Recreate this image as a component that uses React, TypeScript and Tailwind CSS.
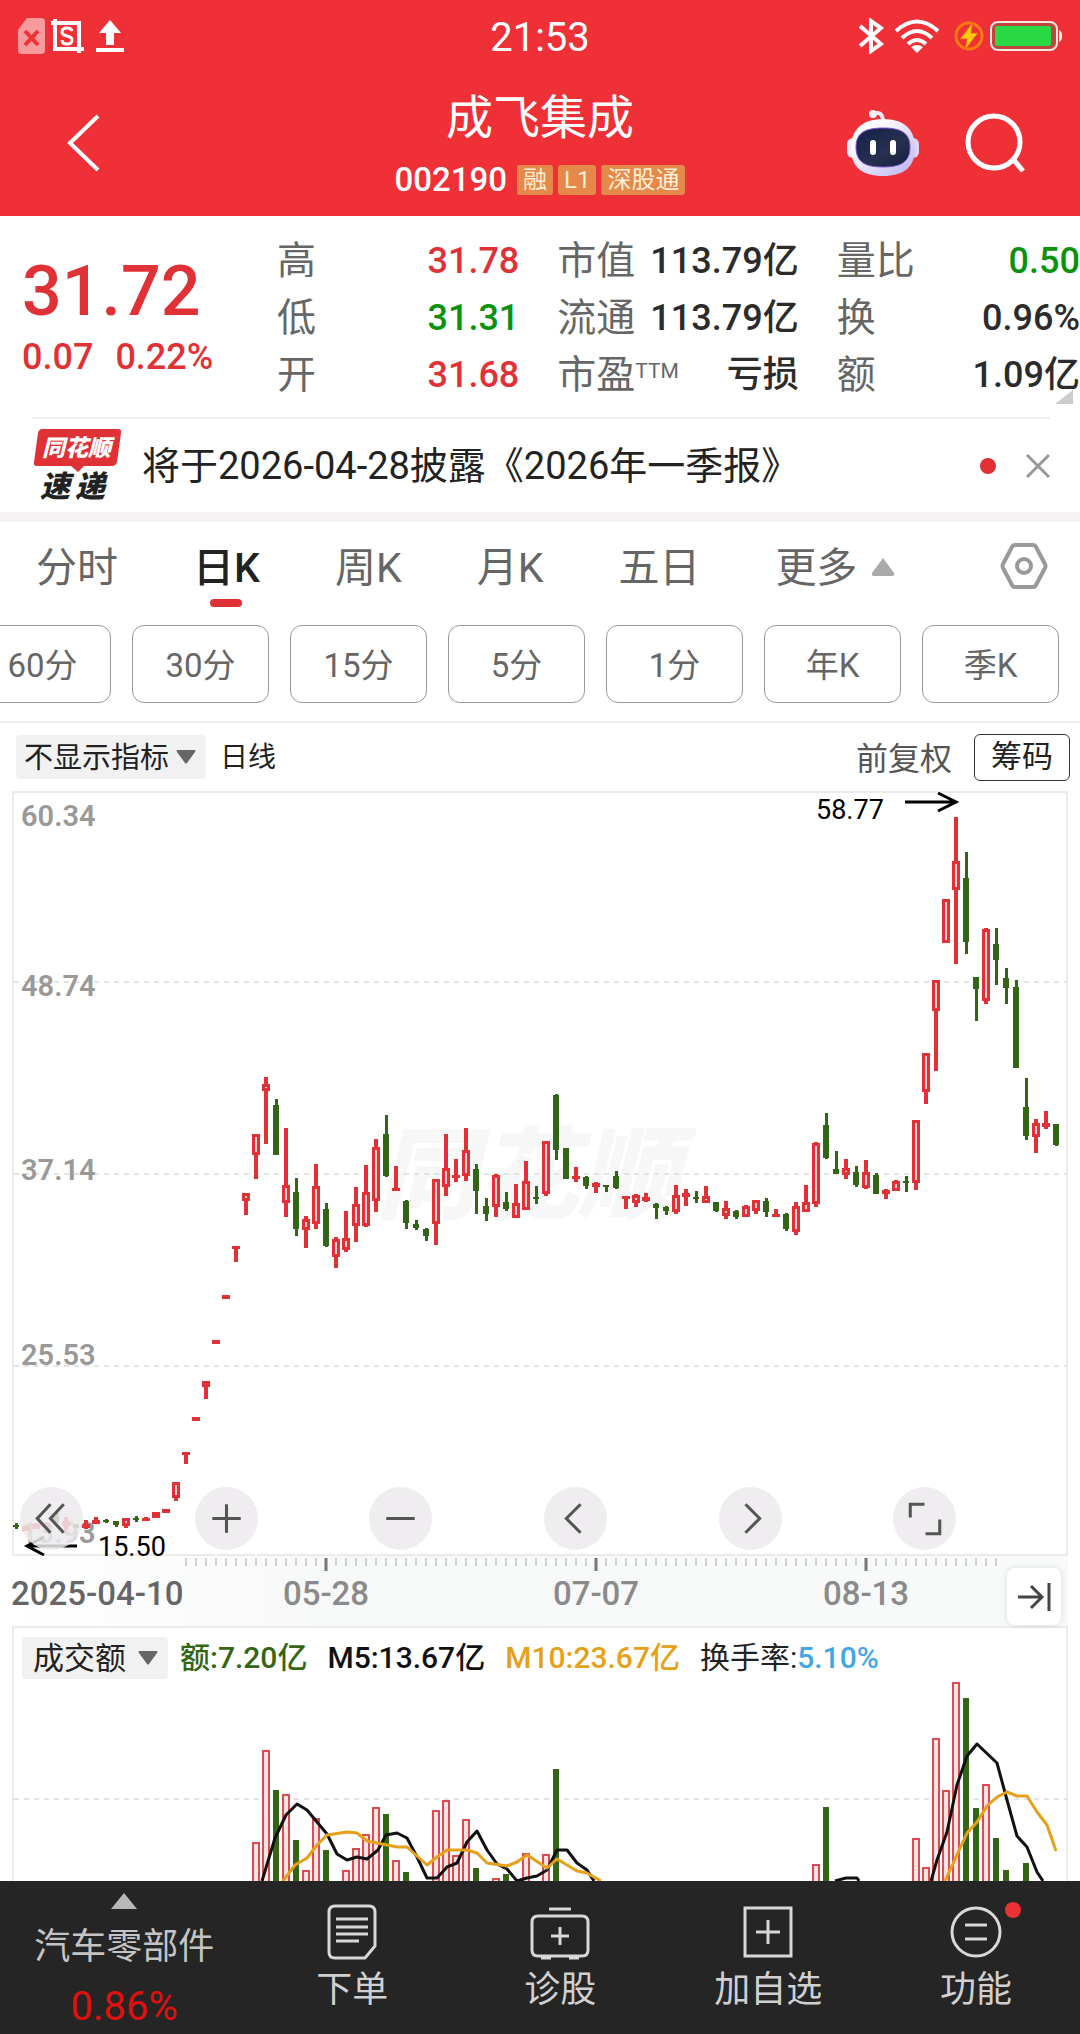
import { useState } from "react";

type Candle = [up: 0 | 1, high: number, top: number, bottom: number, low: number];

// vertical positions inside the price panel, one entry per trading day
const candles: Candle[] = [
  [0, 732, 734, 736, 738], [1, 735, 735, 740, 740], [1, 732, 733, 738, 738], [1, 732, 733, 736, 736],
  [0, 722, 722, 732, 732], [1, 726, 730, 735, 739], [0, 733, 734, 737, 737], [1, 729, 733, 737, 738],
  [1, 726, 729, 733, 733], [0, 728, 729, 731, 732], [0, 730, 730, 734, 736], [1, 727, 727, 735, 737],
  [0, 725, 727, 729, 731], [1, 726, 727, 730, 730], [1, 721, 721, 727, 727], [1, 718, 718, 722, 722],
  [1, 691, 691, 707, 710], [1, 661, 661, 664, 673], [1, 626, 626, 630, 630], [1, 590, 590, 596, 608],
  [1, 549, 549, 553, 553], [1, 504, 504, 508, 508], [1, 455, 455, 458, 471], [1, 402, 402, 410, 424],
  [1, 343, 343, 364, 388], [1, 286, 293, 300, 353], [0, 308, 314, 364, 364], [1, 337, 394, 412, 426],
  [0, 387, 401, 438, 445], [1, 425, 428, 439, 457], [1, 373, 395, 433, 438], [0, 412, 418, 455, 456],
  [1, 446, 448, 466, 477], [1, 420, 447, 459, 461], [1, 396, 413, 435, 451], [1, 374, 401, 435, 436],
  [1, 348, 356, 410, 421], [0, 324, 343, 385, 386], [1, 375, 397, 400, 400], [0, 409, 410, 432, 438],
  [0, 429, 433, 437, 439], [0, 437, 438, 445, 450], [1, 388, 388, 433, 454], [1, 343, 377, 396, 405],
  [1, 368, 384, 387, 391], [1, 337, 359, 385, 390], [0, 373, 378, 400, 423], [0, 407, 415, 423, 430],
  [1, 383, 384, 416, 426], [0, 401, 411, 418, 420], [1, 393, 412, 427, 427], [1, 370, 390, 419, 419],
  [0, 395, 406, 408, 413], [1, 350, 350, 403, 405], [0, 303, 304, 359, 369], [0, 357, 357, 388, 388],
  [1, 376, 385, 388, 391], [0, 385, 386, 395, 398], [1, 391, 392, 396, 402], [0, 394, 394, 396, 401],
  [0, 380, 385, 397, 398], [1, 405, 405, 408, 418], [1, 403, 404, 412, 416], [1, 402, 406, 410, 411],
  [0, 412, 413, 417, 428], [0, 415, 416, 420, 424], [1, 394, 404, 421, 423], [1, 398, 402, 406, 415],
  [0, 400, 406, 408, 412], [1, 395, 405, 412, 412], [0, 411, 411, 420, 421], [1, 410, 417, 425, 428],
  [0, 419, 420, 426, 428], [1, 414, 415, 426, 426], [1, 409, 409, 420, 423], [0, 407, 410, 421, 426],
  [1, 418, 423, 426, 426], [0, 422, 423, 438, 440], [1, 411, 415, 441, 444], [1, 394, 411, 421, 421],
  [1, 351, 352, 413, 416], [0, 322, 334, 367, 368], [0, 360, 378, 383, 383], [1, 368, 377, 384, 388],
  [0, 375, 381, 394, 396], [1, 369, 381, 397, 398], [0, 382, 384, 403, 403], [1, 398, 399, 403, 408],
  [1, 389, 390, 400, 400], [0, 385, 390, 392, 401], [1, 329, 329, 392, 399], [1, 262, 262, 301, 313],
  [1, 189, 189, 220, 280], [1, 108, 108, 152, 152], [1, 26, 70, 99, 173], [0, 61, 87, 151, 163],
  [0, 186, 186, 198, 230], [1, 137, 138, 210, 213], [0, 137, 153, 169, 194], [0, 177, 187, 197, 213],
  [0, 189, 196, 277, 277], [0, 287, 316, 345, 349], [1, 328, 332, 346, 362], [1, 320, 332, 336, 338],
  [0, 333, 333, 354, 355],
];

// [day index, top of the bar]
const volumes: [number, number][] = [
  [24, 162], [25, 70], [26, 110], [27, 114], [28, 160], [29, 190], [30, 138], [31, 170],
  [33, 190], [34, 168], [35, 154], [36, 127], [37, 134], [38, 180], [39, 192], [42, 130],
  [43, 120], [44, 175], [45, 139], [46, 188], [48, 198], [49, 194], [51, 173], [53, 174],
  [54, 89], [80, 184], [81, 127], [90, 158], [91, 187], [92, 58], [93, 110], [94, 2],
  [95, 18], [96, 128], [97, 104], [98, 158], [99, 190], [101, 183],
];

const m5 = [
  "250,201 263,158 274,135 285,124 295,130 305,142 315,154 325,174 335,180 345,177 355,179 366,170 374,155 385,153 395,158 405,177 415,198 425,198 435,187 445,183 455,162 465,151 475,170 485,184 495,189 505,201 515,198 525,196 535,190 545,170 555,170 565,183 575,190 582,201",
  "823,201 834,198 845,198 847,201",
  "919,201 925,180 935,152 945,105 955,76 965,64 985,83 995,120 1005,156 1015,167 1025,192 1031,201",
];
const m10 = [
  "271,201 283,185 295,178 305,165 315,155 335,152 345,153 355,161 385,167 395,167 415,185 425,177 435,170 455,170 465,173 475,183 495,186 505,182 515,175 535,188 545,179 565,191 575,193 589,201",
  "933,201 955,153 965,142 975,126 985,117 995,112 1005,116 1015,116 1025,132 1035,145 1044,171",
];

const quotes = [
  [
    { label: "高", value: "31.78", color: "text-[#e03136]" },
    { label: "低", value: "31.31", color: "text-[#0a930a]" },
    { label: "开", value: "31.68", color: "text-[#e03136]" },
  ],
  [
    { label: "市值", value: "113.79亿", color: "text-[#2b2b2b]" },
    { label: "流通", value: "113.79亿", color: "text-[#2b2b2b]" },
    { label: "市盈", sup: "TTM", value: "亏损", color: "text-[#2b2b2b]" },
  ],
  [
    { label: "量比", value: "0.50", color: "text-[#0a930a]" },
    { label: "换", value: "0.96%", color: "text-[#2b2b2b]" },
    { label: "额", value: "1.09亿", color: "text-[#2b2b2b]" },
  ],
];

const tabs = ["分时", "日K", "周K", "月K", "五日"];
const periods = ["60分", "30分", "15分", "5分", "1分", "年K", "季K"];

const RED = "#e03136";
const GREEN = "#336614";

function StatusBar() {
  return (
    <div className="grid h-[72px] grid-cols-[1fr_auto_1fr] items-center px-[18px] text-white">
      <div className="flex items-center gap-[6px]">
        <svg width="27" height="36" viewBox="0 0 27 36">
          <path d="M9 0H23Q27 0 27 4V32Q27 36 23 36H4Q0 36 0 32V12Z" fill="#f99a9d" />
          <path d="M7 13L20 27M20 13L7 27" stroke="#ef3036" strokeWidth="4" />
        </svg>
        <svg width="33" height="34" viewBox="0 0 33 34" fill="none" stroke="#fff" strokeWidth="4">
          <path d="M0 4H28V34M4 0V30H33" />
          <path d="M21 12Q20 9 16 9Q11 9 11 13Q11 16 16 17Q21 18 21 21Q21 25 16 25Q11 25 11 21" strokeWidth="3" />
        </svg>
        <svg className="ml-[6px]" width="28" height="34" viewBox="0 0 28 34" fill="#fff">
          <path d="M14 1L25 14H18V26H10V14H3ZM0 29H28V33H0Z" />
        </svg>
      </div>
      <time className="pt-1 text-[40px] leading-[48px]">21:53</time>
      <div className="flex items-center justify-end">
        <svg width="25" height="36" viewBox="0 0 25 36" fill="none" stroke="#fff" strokeWidth="4">
          <path d="M1 8L22 26L12 33V3L22 10L1 28" />
        </svg>
        <svg className="ml-[10px]" width="46" height="34" viewBox="0 0 46 34">
          <g fill="none" stroke="#fff" strokeWidth="4">
            <path d="M2 12Q23 -7 44 12" />
            <path d="M8 19Q23 5 38 19" />
            <path d="M14 25Q23 17 32 25" />
          </g>
          <path d="M17 28Q23 24 29 28L23 34Z" fill="#fff" />
        </svg>
        <svg className="ml-[14px]" width="30" height="30" viewBox="0 0 30 30">
          <circle cx="15" cy="15" r="13" fill="none" stroke="#fa7a12" strokeWidth="3" />
          <path d="M19 1L6 18H13L11 29L24 12H17Z" fill="#fdc80c" stroke="#ef5a20" />
        </svg>
        <svg className="ml-[6px]" width="72" height="30" viewBox="0 0 72 30">
          <rect x="1" y="1" width="66" height="28" rx="7" fill="#c0453c" stroke="#ffe9e4" strokeWidth="2" />
          <rect x="5" y="5" width="56" height="20" rx="2" fill="#2bd944" />
          <path d="M69 9Q72 10 72 15Q72 20 69 21Z" fill="#fff" />
        </svg>
      </div>
    </div>
  );
}

function Robot() {
  return (
    <svg width="72" height="66" viewBox="0 0 72 66">
      <defs>
        <linearGradient id="shell" x1="0" y1="0" x2="1" y2="1">
          <stop offset="0.3" stopColor="#fdfaff" />
          <stop offset="1" stopColor="#b9b0ee" />
        </linearGradient>
        <linearGradient id="visor" x1="0" y1="0" x2="1" y2="1">
          <stop offset="0" stopColor="#15204a" />
          <stop offset="0.6" stopColor="#27304f" />
          <stop offset="1" stopColor="#151d3c" />
        </linearGradient>
      </defs>
      <path d="M26 4Q36 0 36 12" fill="none" stroke="#f6e4f4" strokeWidth="4" />
      <circle cx="26" cy="4" r="4" fill="#fbeef6" />
      <rect x="0" y="28" width="12" height="20" rx="6" fill="#f1ecfd" />
      <rect x="60" y="28" width="12" height="20" rx="6" fill="#ddd6f8" />
      <path d="M36 9C58 9 68 20 68 38C68 57 57 66 36 66C15 66 4 57 4 38C4 20 15 9 36 9Z" fill="url(#shell)" />
      <path d="M36 18C54 18 63 23 63 37C63 52 54 57 36 57C18 57 9 52 9 37C9 23 18 18 36 18Z" fill="url(#visor)" stroke="#7a55d8" />
      <rect x="23" y="30" width="6" height="15" rx="3" fill="#fff" />
      <rect x="43" y="30" width="6" height="15" rx="3" fill="#fff" />
    </svg>
  );
}

function Header() {
  return (
    <header className="bg-[#ef3036] text-white">
      <StatusBar />
      <div className="grid grid-cols-[1fr_auto_1fr] items-center pt-[18px] pb-[21px]">
        <button aria-label="返回" className="ml-[66px] w-9">
          <svg width="36" height="58" viewBox="0 0 36 58" fill="none" stroke="#fff" strokeWidth="4">
            <path d="M32 2L4 29L32 56" />
          </svg>
        </button>
        <div className="flex flex-col items-center gap-[19px]">
          <h1 className="text-[47px] leading-[56px]">成飞集成</h1>
          <div className="flex h-[30px] items-center gap-[5px]">
            <span className="mr-[5px] text-[33px] leading-[30px] font-medium">002190</span>
            {["融", "L1", "深股通"].map((tag) => (
              <span
                key={tag}
                className="h-[30px] rounded-[3px] bg-[#e5894a] px-[6px] text-[24px] leading-[30px] text-[#ffeed6]"
              >
                {tag}
              </span>
            ))}
          </div>
        </div>
        <div className="flex items-center justify-end gap-[46px] pr-[55px]">
          <button aria-label="智能助手">
            <Robot />
          </button>
          <button aria-label="搜索">
            <svg width="60" height="60" viewBox="0 0 60 60" fill="none" stroke="#fff" strokeWidth="5">
              <circle cx="29" cy="29" r="26" />
              <path d="M48 46L58 58" />
            </svg>
          </button>
        </div>
      </div>
    </header>
  );
}

function Quote() {
  return (
    <section className="relative flex pt-[17px] pb-[13px]">
      <div className="w-[277px] shrink-0 pl-[22px] text-[#e03136]">
        <div className="pt-5 text-[70px] leading-[76px] font-medium">31.72</div>
        <div className="flex gap-[22px] pt-1 text-[36px] leading-[48px] font-medium">
          <span>0.07</span>
          <span>0.22%</span>
        </div>
      </div>
      <div className="grid flex-1 grid-cols-[242fr_241fr_243fr] gap-x-[38px]">
        {quotes.map((column, i) => (
          <dl key={i}>
            {column.map((item) => (
              <div key={item.label} className="flex justify-between leading-[57px] whitespace-nowrap">
                <dt className="flex text-[39px] text-[#666]">
                  {item.label}
                  {"sup" in item && <span className="text-[21px] leading-[48px]">{item.sup}</span>}
                </dt>
                <dd className={`text-[36px] font-medium ${item.color}`}>{item.value}</dd>
              </div>
            ))}
          </dl>
        ))}
      </div>
      <svg className="absolute right-[7px] bottom-[13px]" width="18" height="14" viewBox="0 0 18 14">
        <path d="M18 0V14H0Z" fill="#ccc" />
      </svg>
    </section>
  );
}

function News() {
  return (
    <section className="mr-[30px] ml-8 flex h-[95px] items-center border-t-2 border-[#f0f0f0]">
      <svg
        className="overflow-visible"
        width="92"
        height="76"
        viewBox="0 0 92 76"
        fontFamily="'Noto Sans CJK SC', sans-serif"
      >
        <path d="M10 1H86Q90 1 89 5L85 34Q84 38 80 38H52L46 44L39 38H5Q1 38 2 34L6 5Q7 1 10 1Z" fill={RED} />
        <text x="10" y="28" fontSize="23" fontWeight="900" fontStyle="italic" fill="#fff">
          同花顺
        </text>
        <text x="8" y="69" fontSize="30" fontWeight="900" fontStyle="italic" fill="#222">
          速
        </text>
        <text x="43" y="69" fontSize="30" fontWeight="900" fontStyle="italic" fill="#222">
          递
        </text>
      </svg>
      <a href="#news" className="ml-[18px] flex-1 text-[38px] leading-[48px] text-[#222]">
        将于2026-04-28披露《2026年一季报》
      </a>
      <span className="size-4 rounded-full bg-[#e03136]" />
      <button aria-label="关闭" className="ml-[30px]">
        <svg width="24" height="24" viewBox="0 0 24 24" stroke="#999" strokeWidth="3">
          <path d="M1 1L23 23M23 1L1 23" />
        </svg>
      </button>
    </section>
  );
}

function Tabs() {
  const [active, setActive] = useState("日K");

  return (
    <nav className="flex h-[103px] items-start gap-[75px] border-t-[10px] border-[#f5f3f4] box-content px-9 text-[41px] leading-[56px] text-[#666]">
      {tabs.map((tab) => (
        <button
          key={tab}
          onClick={() => setActive(tab)}
          className={`mt-[18px] flex flex-col items-center gap-[3px] ${tab === active ? "font-medium text-[#222]" : ""}`}
        >
          {tab}
          {tab === active && <span className="h-2 w-8 rounded-[4px] bg-[#e03136]" />}
        </button>
      ))}
      <button className="mt-[18px] flex items-center gap-[14px]">
        更多
        <svg width="24" height="20" viewBox="0 0 24 20">
          <path d="M12 0L23 15Q24 18 21 18H3Q0 18 1 15Z" fill="#aaa" />
        </svg>
      </button>
      <button aria-label="设置" className="mt-5 -mr-[5px] ml-auto">
        <svg width="50" height="48" viewBox="0 0 50 48" fill="none" stroke="#999" strokeWidth="4">
          <path d="M16 3H34Q36 3 37 5L46 22Q47 24 46 26L37 43Q36 45 34 45H16Q14 45 13 43L4 26Q3 24 4 22L13 5Q14 3 16 3Z" />
          <circle cx="25" cy="24" r="7" />
        </svg>
      </button>
    </nav>
  );
}

function Periods() {
  return (
    <div className="overflow-hidden border-b-2 border-[#ececec] pb-[18px]">
      <div className="-ml-[26px] flex gap-[21px]">
        {periods.map((period) => (
          <button
            key={period}
            className="h-[78px] w-[137px] shrink-0 rounded-[12px] border border-[#999] pt-1 text-[33px] leading-[48px] text-[#666]"
          >
            {period}
          </button>
        ))}
      </div>
    </div>
  );
}

function DownArrow() {
  return (
    <svg className="pointer-events-none absolute right-[10px]" width="20" height="14" viewBox="0 0 20 14">
      <path d="M1 0H19Q20 1 19 2L11 13Q10 14 9 13L1 2Q0 1 1 0Z" fill="#666" />
    </svg>
  );
}

function ChartToolbar() {
  return (
    <div className="flex h-[68px] items-center pr-[10px] pl-4 text-[#222]">
      <label className="relative flex items-center">
        <select
          aria-label="指标"
          className="h-11 appearance-none rounded-[4px] bg-[#f1f1f1] pt-[2px] pr-9 pl-2 text-[29px] leading-[42px]"
        >
          <option>不显示指标</option>
        </select>
        <DownArrow />
      </label>
      <span className="ml-[14px] pt-[2px] text-[28px] leading-[44px]">日线</span>
      <button className="mr-[22px] ml-auto pt-1 text-[32px] leading-[44px] text-[#555]">前复权</button>
      <button className="h-[47px] rounded-[6px] border border-[#333] px-[16px] text-[31px] leading-[44px]">筹码</button>
    </div>
  );
}

function CandleShape({ candle, x }: { candle: Candle; x: number }) {
  const [up, high, top, bottom, low] = candle;
  const height = bottom - top;
  if (!up) {
    return (
      <g fill={GREEN}>
        <rect x={x - 1} y={high} width={3} height={low - high} />
        <rect x={x - 3} y={top} width={6} height={height} />
      </g>
    );
  }
  return (
    <g fill={RED}>
      <rect x={x - 2} y={high} width={4} height={low - high} />
      <rect x={x - 4} y={top} width={8} height={height} />
      {height > 6 && <rect x={x - 1} y={top + 3} width={2} height={height - 6} fill="#fbd0d0" />}
    </g>
  );
}

const controls = [
  { label: "最早", d: "M30 17L17 31L30 45M43 17L30 31L43 45" },
  { label: "放大", d: "M31 17V45M17 31H45" },
  { label: "缩小", d: "M17 31H45" },
  { label: "左移", d: "M36 17L22 31L36 45" },
  { label: "右移", d: "M26 17L40 31L26 45" },
  { label: "全屏", d: "M17 30V17H31M32 46H46V32" },
];

function PriceChart() {
  return (
    <div className="relative mx-3 border-2 border-[#ebebeb]">
      <svg
        className="block w-full overflow-visible"
        viewBox="2 2 1052 761"
        fontFamily="Roboto, 'Noto Sans CJK SC', sans-serif"
      >
        <text x="364" y="420" fontSize="101" fontWeight="900" fontStyle="italic" fill="#f7f7f7">
          同花顺
        </text>
        <g stroke="#e3e3e3" strokeWidth="2" strokeDasharray="5 5">
          <path d="M2 191H1054M2 383H1054M2 575H1054" />
        </g>
        <g fontSize="29" fontWeight="600" fill="#999">
          <text x="9" y="35">60.34</text>
          <text x="9" y="205">48.74</text>
          <text x="9" y="389">37.14</text>
          <text x="9" y="574">25.53</text>
          <text x="9" y="752">13.93</text>
        </g>
        {candles.map((candle, i) => (
          <CandleShape key={i} candle={candle} x={4 + i * 10} />
        ))}
        <g fontSize="27" fill="#000">
          <text x="804" y="28">58.77</text>
          <text x="86" y="765">15.50</text>
        </g>
        <g fill="none" stroke="#000" strokeWidth="3">
          <path d="M893 11H944M926 2L944 11L926 20" />
          <path d="M65 755H15M32 746L15 755L32 764" />
        </g>
      </svg>
      <div className="absolute bottom-1 left-[6px] flex w-[89%] justify-between">
        {controls.map((control) => (
          <button key={control.label} aria-label={control.label} className="size-[63px] rounded-full bg-[#eceaec]/85">
            <svg viewBox="0 0 62 62" fill="none" stroke="#555" strokeWidth="3">
              <path d={control.d} />
            </svg>
          </button>
        ))}
      </div>
    </div>
  );
}

function TimeAxis() {
  const ticks = Array.from({ length: 82 }, (_, i) => 174 + i * 10);
  return (
    <div className="relative mx-3 h-[70px] bg-linear-to-r from-white via-[#f7f8f8] via-30% to-[#f8f9f9]">
      <svg className="block w-full" viewBox="0 0 1056 70" fontFamily="Roboto, sans-serif">
        {ticks.map((x) => (
          <path key={x} d={`M${x} 2V10`} stroke="#aaa" strokeWidth="1" />
        ))}
        <path d="M314 2V15M584 2V15M854 2V15" stroke="#777" strokeWidth="3" />
        <g fontSize="33" fontWeight="500" fill="#8a8a8a" textAnchor="middle">
          <text x="-1" y="49" textAnchor="start" fill="#666">2025-04-10</text>
          <text x="314" y="49">05-28</text>
          <text x="584" y="49">07-07</text>
          <text x="854" y="49">08-13</text>
        </g>
      </svg>
      <button
        aria-label="最新"
        className="absolute top-3 right-[7px] h-[57px] w-[54px] rounded-[8px] bg-white shadow-[0_0_6px_rgba(0,0,0,0.12)]"
      >
        <svg viewBox="0 0 54 57" fill="none" stroke="#444" strokeWidth="3">
          <path d="M11 29H34M24 18L35 29L24 40M42 15V43" />
        </svg>
      </button>
    </div>
  );
}

function VolumeChart() {
  return (
    <div className="mx-3 border-x-2 border-t-2 border-[#ebebeb]">
      <div className="flex h-[52px] items-center pt-[7px] pl-2 text-[30px] leading-[42px] font-medium whitespace-nowrap">
        <label className="relative flex items-center">
          <select
            aria-label="副图指标"
            className="h-[42px] appearance-none rounded-[4px] bg-[#f1f1f1] pt-[2px] pr-[42px] pl-[11px] text-[31px] leading-[40px] font-normal text-[#222]"
          >
            <option>成交额</option>
          </select>
          <DownArrow />
        </label>
        <span className="ml-3 text-[#336614]">额:7.20亿</span>
        <span className="ml-5 text-[#111]">M5:13.67亿</span>
        <span className="ml-5 text-[#e6a01a]">M10:23.67亿</span>
        <span className="ml-5 font-normal text-[#222]">换手率:</span>
        <span className="text-[#45a6e5]">5.10%</span>
      </div>
      <svg className="block w-full" viewBox="2 0 1052 201" fill="none">
        <path d="M2 119H1054" stroke="#e3e3e3" strokeWidth="2" strokeDasharray="5 5" />
        {volumes.map(([i, top]) => {
          const x = 4 + i * 10;
          return candles[i][0] === 1 ? (
            <rect key={i} x={x - 3} y={top + 1} width={6} height={220} fill="#fbe3e3" stroke="#dc4b50" strokeWidth="2" />
          ) : (
            <rect key={i} x={x - 3} y={top} width={6} height={220} fill={GREEN} />
          );
        })}
        <g strokeWidth="3" strokeLinejoin="round">
          {m5.map((points) => (
            <polyline key={points} points={points} stroke="#111" />
          ))}
          {m10.map((points) => (
            <polyline key={points} points={points} stroke="#e6a01a" />
          ))}
        </g>
      </svg>
    </div>
  );
}

const actions = [
  {
    label: "下单",
    icon: (
      <>
        <path d="M9 4H43Q49 4 49 10V44L39 56H9Q3 56 3 50V10Q3 4 9 4Z" />
        <path d="M10 17H42M10 25H42M10 32H42M10 39H33" />
      </>
    ),
  },
  {
    label: "诊股",
    icon: (
      <>
        <path d="M4 14H48Q54 14 54 20V48Q54 54 48 54H4Q-2 54 -2 48V20Q-2 14 4 14Z" />
        <path d="M15 7H37M26 25V43M17 34H35M7 56H17M35 56H45" />
      </>
    ),
  },
  {
    label: "加自选",
    icon: <path d="M3 6H49V54H3ZM26 18V42M14 30H38" />,
  },
  {
    label: "功能",
    dot: true,
    icon: (
      <>
        <circle cx="26" cy="30" r="24" />
        <path d="M15 23H37M15 37H37" />
      </>
    ),
  },
];

function BottomBar() {
  return (
    <footer className="flex h-[153px] bg-[#252525] text-[#d0d0d0]">
      <button className="flex w-[23%] flex-col items-center pt-3">
        <svg width="26" height="16" viewBox="0 0 26 16">
          <path d="M13 0L26 16H0Z" fill="#b8b8b8" />
        </svg>
        <span className="pt-[14px] text-[36px] leading-[48px] text-[#c4c4c4]">汽车零部件</span>
        <span className="pt-3 text-[40px] leading-[48px] text-[#e01010]">0.86%</span>
      </button>
      {actions.map((action) => (
        <button key={action.label} className="flex flex-1 flex-col items-center pt-[21px]">
          <span className="relative">
            <svg
              className="overflow-visible"
              width="52"
              height="60"
              viewBox="0 0 52 60"
              fill="none"
              stroke="#d8d8d8"
              strokeWidth="3"
            >
              {action.icon}
            </svg>
            {action.dot && <span className="absolute top-0 -right-[19px] size-4 rounded-full bg-[#e93136]" />}
          </span>
          <span className="pt-[2px] text-[36px] leading-[52px]">{action.label}</span>
        </button>
      ))}
    </footer>
  );
}

export default function App() {
  return (
    <div className="w-full overflow-hidden bg-white font-[Roboto,'Noto_Sans_CJK_SC',sans-serif]">
      <Header />
      <Quote />
      <News />
      <Tabs />
      <Periods />
      <ChartToolbar />
      <PriceChart />
      <TimeAxis />
      <VolumeChart />
      <BottomBar />
    </div>
  );
}
